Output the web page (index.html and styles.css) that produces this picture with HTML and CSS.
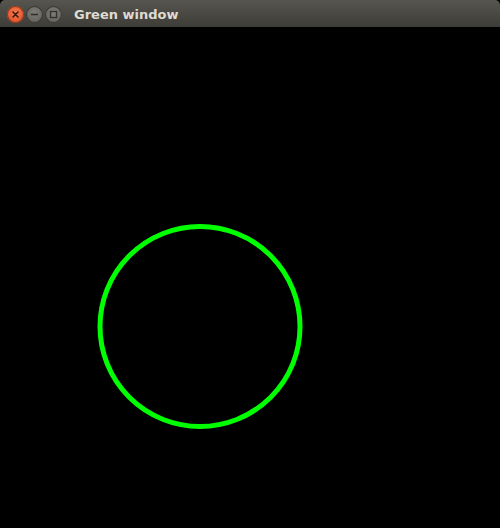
FILE: index.html
```html
<!DOCTYPE html>
<html>
<head>
<meta charset="utf-8">
<link rel="stylesheet" href="styles.css">
</head>
<body>
<div class="window">
  <div class="titlebar">
    <div class="controls">
      <span class="btn close">
        <svg width="17" height="17" viewBox="0 0 17 17"><path d="M6 6 L11 11 M11 6 L6 11" stroke="#3a1a10" stroke-width="1.6" stroke-linecap="round"/></svg>
      </span>
      <span class="btn">
        <svg width="17" height="17" viewBox="0 0 17 17"><path d="M5 8.5 H12" stroke="#2f2f2c" stroke-width="1.6"/></svg>
      </span>
      <span class="btn">
        <svg width="17" height="17" viewBox="0 0 17 17"><rect x="5.5" y="5.5" width="6" height="6" fill="none" stroke="#2f2f2c" stroke-width="1.3"/></svg>
      </span>
    </div>
    <div class="title">Green window</div>
  </div>
  <div class="canvas">
    <svg width="500" height="501" viewBox="0 0 500 501">
      <circle cx="200" cy="299.5" r="100" fill="none" stroke="#00ff00" stroke-width="5"/>
    </svg>
  </div>
</div>
</body>
</html>
```
FILE: styles.css
```css
html, body {
  margin: 0;
  padding: 0;
  background: #000;
}
.window {
  width: 500px;
  height: 528px;
  display: flex;
  flex-direction: column;
  background: #000;
}
.titlebar {
  height: 27px;
  flex: none;
  display: flex;
  align-items: center;
  background: linear-gradient(#57554f, #3d3c37);
  border-radius: 5px 5px 0 0;
  box-sizing: border-box;
  padding-left: 7px;
}
.controls {
  display: flex;
  gap: 2px;
  margin-top: 1px;
}
.btn {
  width: 17px;
  height: 17px;
  border-radius: 50%;
  display: block;
  background: radial-gradient(circle at 50% 40%, #7e7d77, #5a5954);
  box-shadow: inset 0 0 0 1px #363531;
}
.btn svg { display: block; }
.btn.close {
  background: radial-gradient(circle at 50% 40%, #f27a4e, #e0461c);
  box-shadow: inset 0 0 0 1px #8a3a1c;
}
.title {
  margin-left: 12px;
  font-family: "DejaVu Sans", sans-serif;
  font-weight: bold;
  font-size: 13px;
  color: #dfdbd2;
  margin-top: 1px;
}
.canvas {
  flex: 1;
  background: #000;
}
.canvas svg { display: block; }
```
